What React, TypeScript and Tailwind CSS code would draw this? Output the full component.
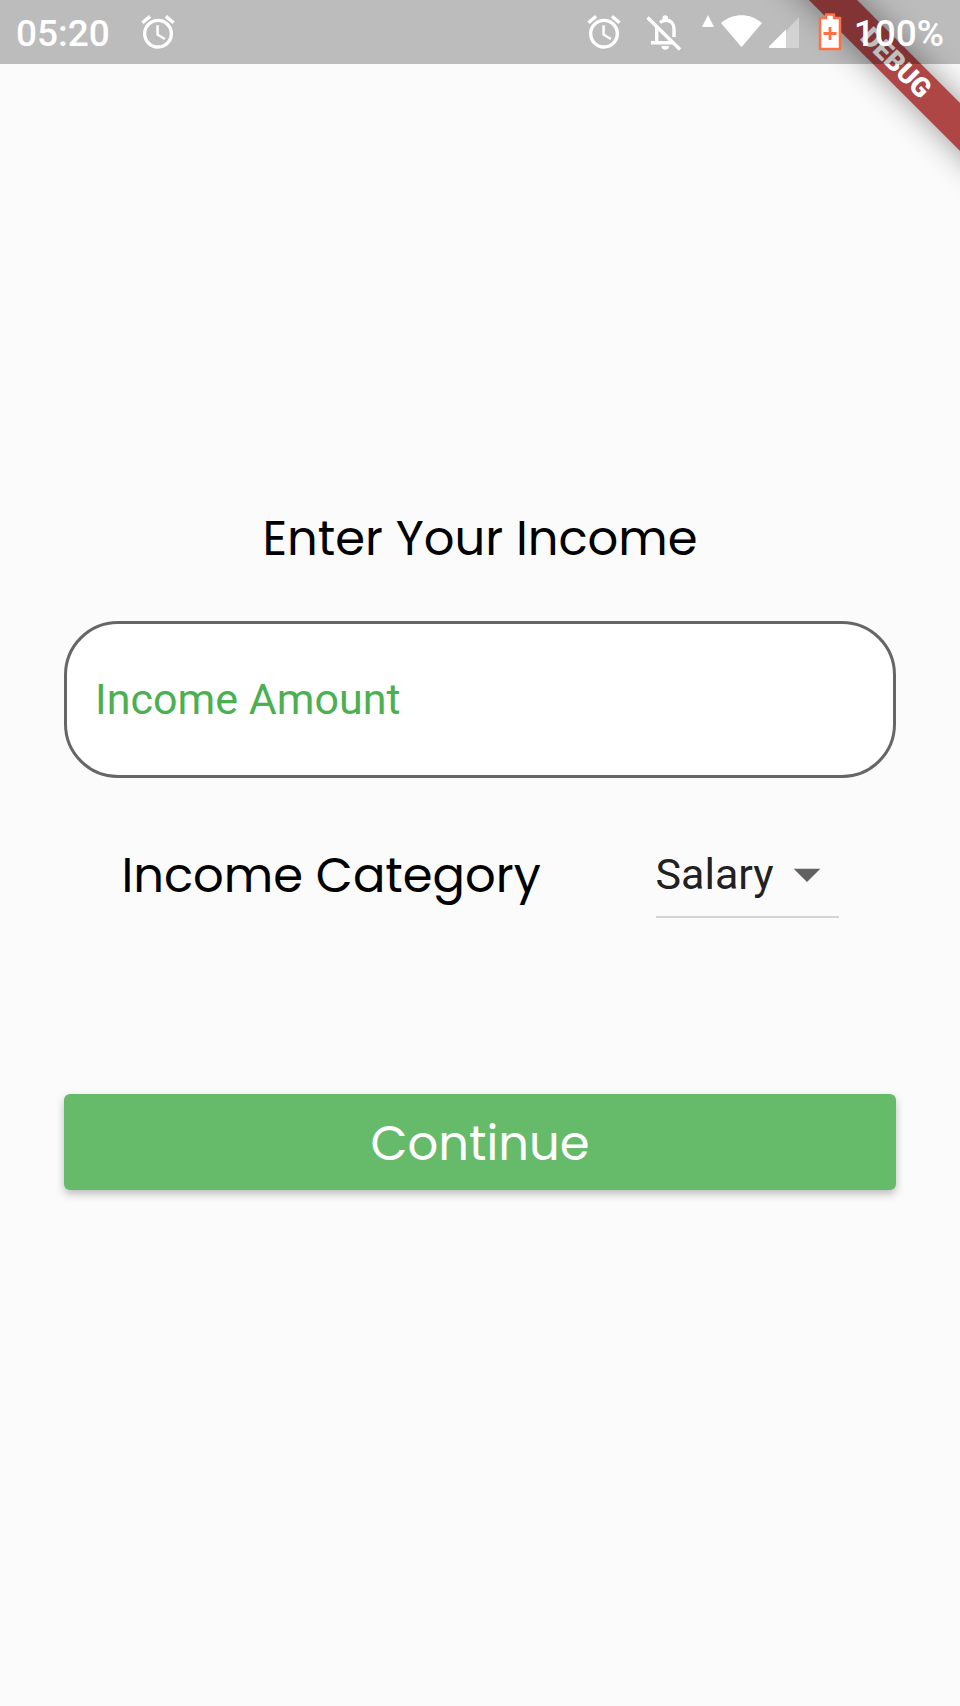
import { useState } from "react";
import { MdAccessAlarm } from "react-icons/md";

function BellOffIcon() {
  return (
    <svg
      className="size-10"
      viewBox="0 0 40 40"
      fill="none"
      stroke="#fff"
      strokeWidth="3.400"
      aria-hidden="true"
    >
      <path d="M3.500 5.500 L36 37.500" />
      <path d="M12.700 15 V30.700 M7 30.700 H29" />
      <path d="M16 10.500 C18 9 20 8.300 22 8.300 C27 8.300 30 12 30 17 V25" />
      <path d="M18.500 8 V6 A2.700 2.700 0 0 1 24 6 V8 Z" fill="#fff" stroke="none" />
      <path d="M17.500 34 H25 A3.700 3.700 0 0 1 17.500 34 Z" fill="#fff" stroke="none" />
    </svg>
  );
}

function NetworkIcon() {
  return (
    <svg className="h-10 w-[100px]" viewBox="0 0 100 40" aria-hidden="true">
      <path d="M2 15 L8 3 L14 15 Z" fill="#fff" />
      <path d="M21 11 C33 .5 50 .5 62 11 L42.500 34 Q41.500 35.500 40.500 34 Z" fill="#fff" />
      <path d="M86 19 L99 5 V36 H86 Z" fill="#fff" fillOpacity="0.35" />
      <path d="M69 36 V34.500 L86 17.500 V36 Z" fill="#fff" />
    </svg>
  );
}

function BatteryIcon() {
  return (
    <svg className="h-10 w-6" viewBox="0 0 24 40" aria-hidden="true">
      <path
        d="M8 2.500 H16 V6 H22 V37 H2 V6 H8 Z"
        fill="#fff"
        stroke="#ff7043"
        strokeWidth="2.500"
        strokeLinejoin="round"
      />
      <path d="M12 15 V28 M5.500 21.500 H18.500" stroke="#ff7043" strokeWidth="2.800" />
    </svg>
  );
}

function StatusBar() {
  return (
    <header className="relative flex h-16 items-center justify-between bg-black/25 px-4 text-[37px] font-medium text-white">
      <div className="flex items-center gap-7">
        <span className="pt-1">05:20</span>
        <MdAccessAlarm className="size-10" />
      </div>
      <div className="flex items-center">
        <MdAccessAlarm className="mr-5 size-10" />
        <BellOffIcon />
        <span className="ml-4 mr-[18px]">
          <NetworkIcon />
        </span>
        <span className="mr-3">
          <BatteryIcon />
        </span>
        <span className="pt-1">100%</span>
      </div>
    </header>
  );
}

function DebugBanner() {
  return (
    <div className="pointer-events-none absolute right-0 top-0 size-60 overflow-hidden">
      <div className="absolute -right-[86px] top-[46px] flex h-[34px] w-[300px] rotate-45 items-center justify-center bg-[#ae4646] text-[27px] font-black text-white shadow-[0_0_32px_rgba(0,0,0,0.4)]">
        DEBUG
      </div>
    </div>
  );
}

export default function App() {
  const [amount, setAmount] = useState("");
  const [category, setCategory] = useState("Salary");

  return (
    <div className="relative flex min-h-screen flex-col bg-[#fbfbfb] font-[Roboto,sans-serif]">
      <DebugBanner />
      <StatusBar />
      <main className="flex flex-1 flex-col justify-center px-16 pb-20">
        <form onSubmit={(e) => e.preventDefault()}>
          <h1 className="text-center font-[Poppins,Inter,sans-serif] text-5xl leading-[76px] text-black">
            Enter Your Income
          </h1>
          <input
            type="text"
            inputMode="decimal"
            aria-label="Income Amount"
            placeholder="Income Amount"
            value={amount}
            onChange={(e) => setAmount(e.target.value)}
            className="mt-11 h-[157px] w-full rounded-[54px] border-[3px] border-[#666666] bg-white px-7 text-[43px] text-[#212121] outline-none placeholder:text-[#4caf50]"
          />
          <div className="mt-14 flex items-center justify-around">
            <label
              htmlFor="category"
              className="font-[Poppins,Inter,sans-serif] text-5xl leading-[72px] text-black"
            >
              Income Category
            </label>
            <div className="relative">
              <select
                id="category"
                value={category}
                onChange={(e) => setCategory(e.target.value)}
                className="h-[84px] appearance-none border-b-2 border-[#d5d5d5] bg-transparent pr-16 text-[43px] text-[#212121] outline-none"
              >
                <option>Salary</option>
              </select>
              <svg
                className="pointer-events-none absolute right-0 top-2 size-16"
                viewBox="0 0 24 24"
                fill="#616161"
                aria-hidden="true"
              >
                <path d="M7 10l5 5 5-5z" />
              </svg>
            </div>
          </div>
          <button
            type="submit"
            className="mt-44 h-24 w-full rounded-md bg-[#66bb6a] pt-1 font-[Poppins,Inter,sans-serif] text-5xl text-white shadow-[0_4px_8px_rgba(0,0,0,0.25)]"
          >
            Continue
          </button>
        </form>
      </main>
    </div>
  );
}
